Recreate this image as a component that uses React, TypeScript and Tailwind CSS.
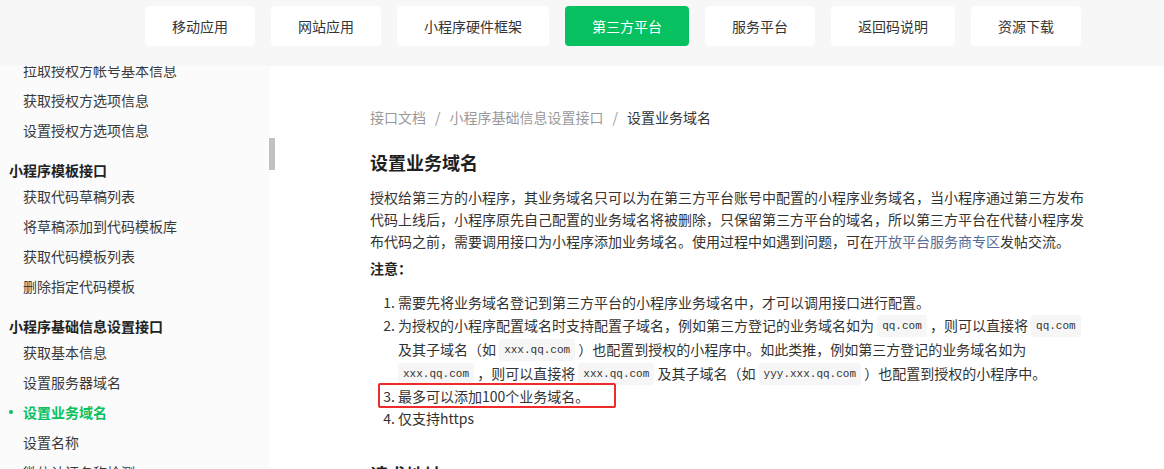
import React from "react";

const navItems = ["移动应用", "网站应用", "小程序硬件框架", "第三方平台", "服务平台", "返回码说明", "资源下载"];

type Group = { title?: string; items: string[] };
const groups: Group[] = [
  { items: ["拉取授权方帐号基本信息", "获取授权方选项信息", "设置授权方选项信息"] },
  { title: "小程序模板接口", items: ["获取代码草稿列表", "将草稿添加到代码模板库", "获取代码模板列表", "删除指定代码模板"] },
  { title: "小程序基础信息设置接口", items: ["获取基本信息", "设置服务器域名", "设置业务域名", "设置名称", "微信认证名称检测", "修改头像", "修改简介"] },
];

function Code({ children }: { children: React.ReactNode }) {
  return (
    <span className="font-['Liberation_Mono',monospace] text-[11px] leading-none bg-[#f6f6f6] text-[#333] px-[5px] py-[5px] rounded-[3px] align-[2px]">
      {children}
    </span>
  );
}

export default function App() {
  return (
    <div className="w-[1164px] h-[469px] overflow-hidden bg-white flex flex-col font-['Noto_Sans_CJK_SC','Noto_Sans',sans-serif] text-[#333]">
      <div className="h-[66px] shrink-0 bg-[#f7f7f7] flex items-start gap-4 pt-[6px] pl-[145px]">
        {navItems.map((n) => (
          <div
            key={n}
            className={
              n === "第三方平台"
                ? "h-[40px] px-[27px] rounded-[4px] bg-[#07c160] text-white text-[14px] flex items-center"
                : "h-[40px] px-[27px] rounded-[4px] bg-white text-[#353535] text-[14px] flex items-center"
            }
          >
            {n}
          </div>
        ))}
      </div>
      <div className="flex flex-1 min-h-0">
        <div className="w-[269px] shrink-0 bg-[#fbfbfb] overflow-hidden">
          <div className="-mt-[11px]">
            {groups.map((g, gi) => (
              <div key={gi}>
                {g.title && (
                  <div className="pt-[14px] pl-[9px] text-[14px] leading-[22px] font-bold text-[#222]">{g.title}</div>
                )}
                {g.items.map((it) =>
                  it === "设置业务域名" ? (
                    <div key={it} className="flex items-center pl-[9px] h-[30px] text-[14px] font-bold text-[#07c160]">
                      <span className="w-[4px] h-[4px] rounded-full bg-[#07c160]" />
                      <span className="ml-[10px]">{it}</span>
                    </div>
                  ) : (
                    <div key={it} className="pl-[23px] text-[14px] leading-[30px] text-[#3a3a3a]">
                      {it}
                    </div>
                  )
                )}
              </div>
            ))}
          </div>
        </div>
        <div className="w-[6px] shrink-0">
          <div className="mt-[72px] h-[32px] bg-[#c1c1c1]" />
        </div>
        <div className="pl-[95px] pt-[40px] flex-1">
          <div className="text-[14px] leading-[22px] text-[#9a9a9a]">
            <span>接口文档</span>
            <span className="px-[9px]">/</span>
            <span>小程序基础信息设置接口</span>
            <span className="px-[9px]">/</span>
            <span className="text-[#353535]">设置业务域名</span>
          </div>
          <h2 className="mt-[20px] text-[18px] leading-[28px] font-bold text-[#1f1f1f]">设置业务域名</h2>
          <div className="w-[720px] text-[14px] leading-[22px] text-[#333]">
            <p className="mt-[10px]">
              授权给第三方的小程序，其业务域名只可以为在第三方平台账号中配置的小程序业务域名，当小程序通过第三方发布代码上线后，小程序原先自己配置的业务域名将被删除，只保留第三方平台的域名，所以第三方平台在代替小程序发布代码之前，需要调用接口为小程序添加业务域名。使用过程中如遇到问题，可在
              <span className="text-[#576b95]">开放平台服务商专区</span>发帖交流。
            </p>
            <p className="mt-[5px] font-bold text-[#222]">注意：</p>
            <ol className="mt-[12px] list-decimal pl-[28px]">
              <li>需要先将业务域名登记到第三方平台的小程序业务域名中，才可以调用接口进行配置。</li>
              <li className="leading-[24px]">
                为授权的小程序配置域名时支持配置子域名，例如第三方登记的业务域名如为 <Code>qq.com</Code> ，则可以直接将 <Code>qq.com</Code> 及其子域名（如 <Code>xxx.qq.com</Code> ）也配置到授权的小程序中。如此类推，例如第三方登记的业务域名如为 <Code>xxx.qq.com</Code> ，则可以直接将 <Code>xxx.qq.com</Code> 及其子域名（如 <Code>yyy.xxx.qq.com</Code> ）也配置到授权的小程序中。
              </li>
              <li className="relative">
                最多可以添加100个业务域名。
                <div className="absolute -left-[20px] -top-[2px] w-[238px] h-[25px] border-2 border-[#ef2b2b] rounded-[2px]" />
              </li>
              <li>仅支持https</li>
            </ol>
            <h3 className="mt-[31px] text-[18px] leading-[28px] font-bold text-[#1f1f1f]">请求地址</h3>
          </div>
        </div>
      </div>
    </div>
  );
}
